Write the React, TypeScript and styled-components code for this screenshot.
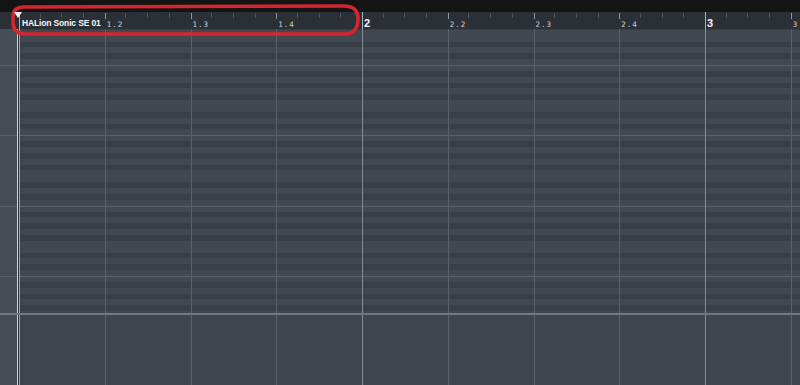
import React from "react";
import styled, { createGlobalStyle } from "styled-components";

const BEAT = 85.75;
const OCTAVE = 70.33;
const OCTAVE_START = 36; // first octave line, from top of note area
const BLACK_KEYS = [1, 3, 5, 8, 10];

const GlobalStyle = createGlobalStyle`
  *, *::before, *::after { box-sizing: border-box; }
  html, body { margin: 0; padding: 0; background: #131313; }
  body { font-family: "Liberation Sans", Arial, sans-serif; }
`;

// piano roll stripes, one octave repeated (B at top, C at bottom)
const keyStripes = () => {
  const row = OCTAVE / 12;
  const stops: string[] = [];
  const o = OCTAVE_START;
  stops.push(`#5a626c ${o}px`, `#5a626c ${o + 1}px`);
  for (let i = 0; i < 12; i++) {
    const c = BLACK_KEYS.includes(i) ? "#393f47" : "#414850";
    const from = Math.max(o + i * row, o + 1);
    stops.push(`${c} ${from.toFixed(2)}px`, `${c} ${(o + (i + 1) * row).toFixed(2)}px`);
  }
  return `repeating-linear-gradient(to bottom, ${stops.join(", ")})`;
};

const octaveLines = `repeating-linear-gradient(to bottom, #5a626c ${OCTAVE_START}px, #5a626c ${OCTAVE_START + 1}px, transparent ${OCTAVE_START + 1}px, transparent ${OCTAVE_START + OCTAVE}px)`;

const Page = styled.div`
  position: relative;
  display: flex;
  flex-direction: column;
  width: 800px;
  height: 385px;
  overflow: hidden;
  background: #131313;
`;

const TopStrip = styled.div`
  height: 12px;
  flex: none;
  background: #141414;
`;

const Ruler = styled.div`
  display: flex;
  height: 17px;
  flex: none;
  background: #2b3037;
`;

const RulerGutter = styled.div`
  position: relative;
  width: 19px;
  flex: none;
`;

const StartMarker = styled.div`
  position: absolute;
  left: 14px;
  top: 0;
  border-left: 4px solid transparent;
  border-right: 4px solid transparent;
  border-top: 6px solid #eef1f3;
  z-index: 2;
`;

const RulerCell = styled.div<{ $bar: boolean }>`
  display: flex;
  flex-direction: column;
  flex: none;
  width: ${BEAT}px;
  height: 100%;
  background: ${(p) =>
    p.$bar
      ? "linear-gradient(#a6aeb7, #a6aeb7) 0 0 / 1px 100% no-repeat"
      : "linear-gradient(#8f969f, #8f969f) 0 1px / 1px 6px no-repeat"};
`;

const Ticks = styled.div`
  display: flex;
  height: 5px;
  margin-top: 1px;
  flex: none;
`;

const Tick = styled.span`
  flex: 1;
  & + & { border-left: 1px solid #4c545e; }
`;

const BeatLabel = styled.span<{ $kind: "part" | "bar" | "beat" }>`
  padding-left: ${(p) => (p.$kind === "part" ? "3px" : "2px")};
  white-space: nowrap;
  color: ${(p) => (p.$kind === "beat" ? "#cdd2d7" : "#f4f6f8")};
  font-family: ${(p) => (p.$kind === "beat" ? '"DejaVu Sans Mono", monospace' : '"Liberation Sans", Arial, sans-serif')};
  font-weight: ${(p) => (p.$kind === "beat" ? 400 : 700)};
  font-size: ${(p) => (p.$kind === "bar" ? "11px" : p.$kind === "part" ? "8.5px" : "7.5px")};
  letter-spacing: ${(p) => (p.$kind === "beat" ? "1px" : p.$kind === "part" ? "-0.15px" : "0")};
  line-height: ${(p) => (p.$kind === "beat" ? "13px" : "11px")};
`;

const NoteArea = styled.div`
  display: flex;
  height: 284px;
  flex: none;
`;

const Lane = styled.div`
  display: flex;
  flex: 1;
`;

const KeyStrip = styled.div<{ $lines?: boolean }>`
  width: 17px;
  flex: none;
  background: ${(p) => (p.$lines ? `${octaveLines}, #464d56` : "#454c55")};
`;

const PartEdge = styled.div`
  width: 2px;
  flex: none;
  border-left: 1px solid #cdd2d7;
  background: #30353c;
`;

const Timeline = styled.div<{ $keys?: boolean }>`
  display: flex;
  flex: 1;
  background: ${(p) => (p.$keys ? keyStripes() : "#3e454d")};
`;

const BeatColumn = styled.div<{ $bar: boolean; $first?: boolean }>`
  width: ${BEAT}px;
  flex: none;
  border-left: 1px solid ${(p) => (p.$first ? "#9aa2ab" : p.$bar ? "#848e98" : "#59616b")};
`;

const Separator = styled.div`
  height: 2px;
  flex: none;
  background: #6f7883;
`;

const Highlight = styled.svg`
  position: absolute;
  left: 0;
  top: 0;
  pointer-events: none;
`;

const beats = Array.from({ length: 10 }, (_, i) => {
  const bar = Math.floor(i / 4) + 1;
  const beat = (i % 4) + 1;
  return { key: i, bar: beat === 1, label: beat === 1 ? `${bar}` : `${bar}.${beat}` };
});

const Columns = () => (
  <>
    {beats.map((b) => (
      <BeatColumn key={b.key} $bar={b.bar} $first={b.key === 0} />
    ))}
  </>
);

export default function App() {
  return (
    <>
      <GlobalStyle />
      <Page>
        <TopStrip />
        <Ruler>
          <RulerGutter>
            <StartMarker />
          </RulerGutter>
          {beats.map((b) => (
            <RulerCell key={b.key} $bar={b.bar}>
              <Ticks>
                <Tick />
                <Tick />
                <Tick />
                <Tick />
              </Ticks>
              {b.key === 0 ? (
                <BeatLabel $kind="part">HALion Sonic SE 01</BeatLabel>
              ) : (
                <BeatLabel $kind={b.bar ? "bar" : "beat"}>{b.label}</BeatLabel>
              )}
            </RulerCell>
          ))}
        </Ruler>
        <NoteArea>
          <KeyStrip $lines />
          <PartEdge />
          <Timeline $keys>
            <Columns />
          </Timeline>
        </NoteArea>
        <Separator />
        <Lane>
          <KeyStrip />
          <PartEdge />
          <Timeline>
            <Columns />
          </Timeline>
        </Lane>
        <Highlight width="800" height="40" viewBox="0 0 800 40">
          <path
            d="M24 7 L344 6 Q358 6 358 19 Q358 34 344 34 L25 34 Q13 34 13 22 L13 17 Q13 7 24 7 Z"
            fill="none"
            stroke="#d3262f"
            strokeWidth="3.5"
          />
        </Highlight>
      </Page>
    </>
  );
}
